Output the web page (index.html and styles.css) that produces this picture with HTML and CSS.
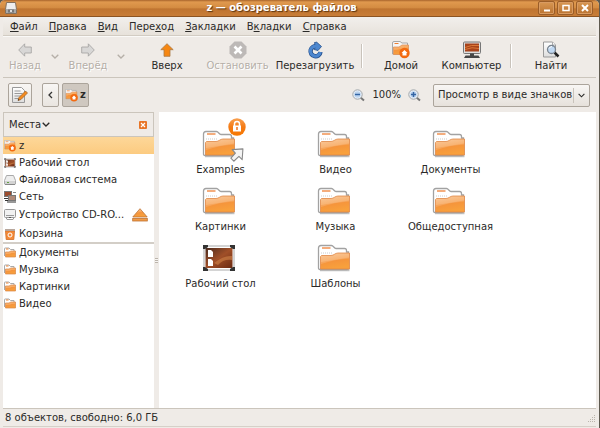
FILE: index.html
```html
<!DOCTYPE html>
<html lang="ru">
<head>
<meta charset="utf-8">
<title>z — обозреватель файлов</title>
<link rel="stylesheet" href="styles.css">
</head>
<body>
<svg class="defs" aria-hidden="true">
  <defs>
    <linearGradient id="orange" x1="0" y1="0" x2="0.3" y2="1"><stop offset="0" stop-color="#f9c08b"/><stop offset="0.5" stop-color="#f7a65a"/><stop offset="0.55" stop-color="#f5943c"/><stop offset="1" stop-color="#f8a03c"/></linearGradient>
    <linearGradient id="paper" x1="0" y1="0" x2="0" y2="1"><stop offset="0" stop-color="#fff"/><stop offset="1" stop-color="#ddd"/></linearGradient>
    <linearGradient id="sunset" x1="0" y1="0" x2="1" y2="1"><stop offset="0" stop-color="#4a2a1e"/><stop offset="0.5" stop-color="#a04f28"/><stop offset="1" stop-color="#6a2a12"/></linearGradient>
    <linearGradient id="lock" x1="0" y1="0" x2="0" y2="1"><stop offset="0" stop-color="#f9a050"/><stop offset="0.5" stop-color="#f47a14"/><stop offset="1" stop-color="#f77800"/></linearGradient>
    <symbol id="folder" viewBox="0 0 34 28">
      <path d="M3 26h29.500" stroke="#999" stroke-width="2.500" opacity="0.600"/>
      <path d="M1.500 24V4q0-2.500 2.500-2.500h10.500c2 0 2.500 3 4.500 3h8.500q2 0 2 2V8h2v16q0 1.500-1.500 1.500H3q-1.500 0-1.500-1.500z" fill="#fff" stroke="#a2a2a2" stroke-width="1.300"/>
      <path d="M4 9h11" stroke="#ccc" stroke-dasharray="1 1"/>
      <path d="M5 4h8.500" stroke="#ee8136" stroke-width="1.300"/>
      <path d="M4.500 11.500h9.500c3 0 4-2.500 7-2.500h11.500v16H3.500V12.500z" fill="url(#orange)" stroke="#df8848" stroke-width="0.800"/>
      <path d="M4 12h10c3 0 4-2.500 7-2.500h11v5C23 15 13 17 4 20z" fill="#fff" opacity="0.160"/>
    </symbol>
    <symbol id="folder-small" viewBox="0 0 12 11">
      <path d="M.5 8.500V1q0-.5.500-.5h4L6.500 2H10v2" fill="#fff" stroke="#aaa"/>
      <path d="M2 1.500h2.500" stroke="#ed8334"/>
      <path d="M1.500 4.500H5L7 3.500h4.500v6h-10z" fill="url(#orange)" stroke="#d98545" stroke-width="0.700"/>
    </symbol>
    <symbol id="home-folder" viewBox="0 0 18 18">
      <path d="M.5 13V2q0-1.500 1.500-1.500h6L10 2h5.500v11z" fill="#f5f5f5" stroke="#a7a7a7"/>
      <path d="M2.500 2.500h4" stroke="#ee7e32"/>
      <path d="M1.500 6H7l3-2h6.500v9.500h-15z" fill="url(#orange)" stroke="#dc8a50" stroke-width="0.700"/>
      <circle cx="12.500" cy="12" r="5.200" fill="#f36a10"/>
      <path d="M9.500 12l3-3 3 3h-1v2.500h-4V12z" fill="#fff"/>
    </symbol>
    <symbol id="desktop" viewBox="0 0 34 28">
      <rect x="2" y="2" width="30" height="24" fill="#fff" stroke="#aaa"/>
      <rect x="3.500" y="4" width="27" height="20" fill="url(#sunset)"/>
      <path d="M12 19q10-8 18-7v4q-9-1-14 5z" fill="#c77a43" opacity="0.700"/>
      <path d="M6 6h3l2 2v5H6zm0 9h3l2 2v5H6z" fill="#fff"/>
      <path d="M1 1h5v2L3 5H1zm32 0h-5v2l3 2h2zM1 27h5v-2l-3-2H1zm32 0h-5v-2l3-2h2z" fill="#333"/>
    </symbol>
    <symbol id="screen" viewBox="0 0 18 17">
      <rect x="0.500" y="0.500" width="17" height="11.500" rx="1" fill="#ddd" stroke="#777"/>
      <rect x="2" y="2" width="14" height="8" fill="#a8431b"/>
      <path d="M2 6q6-3 14-2M2 8q7-3 14-1" stroke="#dc7937" fill="none"/>
      <path d="M7 12h4v2h4.500l1.500 2.500H1L2.500 14H7z" fill="#464646"/>
    </symbol>
    <symbol id="drive" viewBox="0 0 12 11">
      <path d="M2.500 1h7l2 5v3.500H.5V6z" fill="#eee" stroke="#aaa"/>
      <path d="M1 6.500h10v3H1z" fill="#d3d3d3"/><path d="M3 8h2" stroke="#62a040"/><path d="M1 10h10" stroke="#888"/>
    </symbol>
    <symbol id="optical" viewBox="0 0 12 12">
      <rect x="0.500" y="0.500" width="11" height="8" rx="1" fill="#f1f1f1" stroke="#999"/>
      <path d="M2 6.500h8M3 10.500h6l1-2H2z" stroke="#999" fill="#fff"/><path d="M5 8.500h2" stroke="#555"/>
    </symbol>
    <symbol id="network" viewBox="0 0 12 12">
      <rect x="0.500" y="0.500" width="7" height="5" fill="#9b4b2c" stroke="#777"/><rect x="4.500" y="4.500" width="7" height="5" fill="#b08a78" stroke="#777"/>
      <path d="M0 7.500h4M3 11h9M1 9.500h3" stroke="#333"/><path d="M9 1.500h3" stroke="#888"/>
    </symbol>
    <symbol id="trash" viewBox="0 0 12 12">
      <path d="M1.500 3h9l-.7 8.500H2.200z" fill="#f58a38" stroke="#cf6d26" stroke-width="0.800"/><path d="M1 2h10" stroke="#b8a79c" stroke-width="2"/>
      <circle cx="6" cy="7" r="2" fill="none" stroke="#fff"/>
    </symbol>
    <symbol id="eject" viewBox="0 0 16 14">
      <path d="M8 .7L15.200 9H.8z" fill="url(#orange)" stroke="#bd7234" stroke-width="0.800"/><rect x="0.700" y="10.500" width="14.600" height="2.500" fill="#f29b45" stroke="#bd7234" stroke-width="0.800"/>
    </symbol>
    <symbol id="arrow" viewBox="0 0 14 14">
      <path d="M7 .7l6.200 6H10v6.600H4V6.700H.8z" stroke-linejoin="round" fill="currentColor" stroke="#a97945" stroke-width="0.800"/>
    </symbol>
    <symbol id="chevron" viewBox="0 0 8 5"><path d="M.7.7L4 4 7.300.7" fill="none" stroke="currentColor" stroke-width="1.300"/></symbol>
    <symbol id="stop" viewBox="0 0 18 18">
      <path d="M5.500.5h7l5 5v7l-5 5h-7l-5-5v-7z" fill="#bdb9b7"/><path d="M5.500 5.500l7 7m0-7l-7 7" stroke="#fff" stroke-width="2.600"/>
    </symbol>
    <symbol id="reload" viewBox="0 0 18 18">
      <path d="M11 5.500A5 5 0 1 0 14.500 11" fill="none" stroke="#244f8c" stroke-width="4.400"/>
      <path d="M8.500 1.500l2-.2V1l5 4.500-3.500 4-4-1 1.500-2z" fill="#4d87cf" stroke="#244f8c" stroke-width="0.800"/>
      <path d="M10.500 5.300A5 5 0 1 0 14.300 11" fill="none" stroke="#4d87cf" stroke-width="3"/>
    </symbol>
    <symbol id="find" viewBox="0 0 18 17">
      <path d="M1.500.5h9l3 3v12h-12z" fill="url(#paper)" stroke="#999"/><path d="M10.500.5v3h3" fill="#fff" stroke="#aaa"/>
      <path d="M12.500 11l4 4" stroke="#222" stroke-width="2.500"/><circle cx="9.500" cy="8" r="4" fill="#c0d8f2" stroke="#7a848f" stroke-width="1.300"/><path d="M7 7q1-2 3-2" stroke="#fff" fill="none"/>
    </symbol>
    <symbol id="lens" viewBox="0 0 13 13">
      <path d="M8.500 8.500l3.500 3" stroke="#777" stroke-width="2"/><circle cx="5.500" cy="5.500" r="4.700" fill="#eef4fb" stroke="#a0a5aa"/><circle cx="5.500" cy="5.500" r="3.300" fill="#bdd5f0"/>
    </symbol>
    <symbol id="edit" viewBox="0 0 18 17">
      <path d="M1.500.5h9l3 3v12h-12z" fill="url(#paper)" stroke="#999"/><path d="M3.500 4h6M3.500 6.500h8M3.500 9h8M3.500 11.500h6" stroke="#999"/>
      <path d="M7 13.500l1-3 6.500-6.500 2 2-6.500 6.500z" fill="#f58b1f" stroke="#98602a" stroke-width="0.700"/><path d="M7 13.500l.5-1.500 1 1z" fill="#222"/>
    </symbol>
  </defs>
</svg>
<div class="window">
  <header class="titlebar">
    <svg class="app-icon" viewBox="0 0 12 12"><path d="M1.500.5h9l1 7v4H.5v-4z" fill="#eee" stroke="#83715e"/><path d="M1 7h10v4H1z" fill="#aaa"/><path d="M3 7.500h6v3H3z" fill="#777"/><path d="M5 8h2v2H5z" fill="#ddd"/></svg>
    <h1>z — обозреватель файлов</h1>
    <div class="controls">
      <button aria-label="Свернуть"><svg viewBox="0 0 10 10"><path d="M2 7.500h6" stroke="#fff" stroke-width="2"/></svg></button>
      <button aria-label="Развернуть"><svg viewBox="0 0 10 10"><path d="M2 2.500h6v5H2z" fill="none" stroke="#fff" stroke-width="1.500"/></svg></button>
      <button aria-label="Закрыть"><svg viewBox="0 0 10 10"><path d="M2 2l6 6m0-6L2 8" stroke="#fff" stroke-width="2"/></svg></button>
    </div>
  </header>
  <nav class="menubar">
    <button><u>Ф</u>айл</button><button><u>П</u>равка</button><button><u>В</u>ид</button><button>Пере<u>х</u>од</button><button><u>З</u>акладки</button><button>В<u>к</u>ладки</button><button><u>С</u>правка</button>
  </nav>
  <div class="toolbar">
    <button class="tool" disabled><svg class="pale left"><use href="#arrow"/></svg>Назад</button>
    <button class="tool history" disabled aria-label="История назад"><svg><use href="#chevron"/></svg></button>
    <button class="tool" disabled><svg class="pale right"><use href="#arrow"/></svg>Вперёд</button>
    <button class="tool history" disabled aria-label="История вперёд"><svg><use href="#chevron"/></svg></button>
    <button class="tool"><svg class="up"><use href="#arrow"/></svg>Вверх</button>
    <button class="tool" disabled><svg><use href="#stop"/></svg>Остановить</button>
    <button class="tool"><svg><use href="#reload"/></svg>Перезагрузить</button>
    <span class="rule"></span>
    <button class="tool"><svg><use href="#home-folder"/></svg>Домой</button>
    <button class="tool"><svg><use href="#screen"/></svg>Компьютер</button>
    <span class="rule"></span>
    <button class="tool"><svg><use href="#find"/></svg>Найти</button>
  </div>
  <div class="location">
    <button class="box edit" aria-label="Изменить адрес"><svg><use href="#edit"/></svg></button>
    <button class="box prev" aria-label="Раньше"><svg viewBox="0 0 5 8"><path d="M4 1L1 4l3 3" fill="none" stroke="#333" stroke-width="1.300"/></svg></button>
    <button class="box current"><svg><use href="#home-folder"/></svg>z</button>
    <div class="zoom">
      <button aria-label="Уменьшить"><svg viewBox="0 0 13 13"><use href="#lens"/><path d="M3 5.500h5" stroke="#3465a4" stroke-width="1.500"/></svg></button>
      <span>100%</span>
      <button aria-label="Увеличить"><svg viewBox="0 0 13 13"><use href="#lens"/><path d="M3 5.500h5M5.500 3v5" stroke="#3465a4" stroke-width="1.500"/></svg></button>
    </div>
    <div class="view">
      <select aria-label="Режим просмотра"><option>Просмотр в виде значков</option></select>
      <svg><use href="#chevron"/></svg>
    </div>
  </div>
  <div class="content">
    <aside class="sidebar">
      <div class="side-head">
        <button class="places">Места<svg><use href="#chevron"/></svg></button>
        <button class="close" aria-label="Закрыть панель"><svg viewBox="0 0 8 8"><rect width="8" height="8" rx="1" fill="#e87527"/><path d="M2 2l4 4m0-4L2 6" stroke="#fff" stroke-width="1.200"/></svg></button>
      </div>
      <ul>
        <li class="selected"><svg><use href="#home-folder"/></svg>z</li>
        <li><svg><use href="#desktop"/></svg>Рабочий стол</li>
        <li><svg><use href="#drive"/></svg>Файловая система</li>
        <li><svg><use href="#network"/></svg>Сеть</li>
        <li class="tall"><svg><use href="#optical"/></svg>Устройство CD-RO...<button class="eject" aria-label="Извлечь"><svg><use href="#eject"/></svg></button></li>
        <li><svg><use href="#trash"/></svg>Корзина</li>
      </ul>
      <ul class="bookmarks">
        <li><svg><use href="#folder-small"/></svg>Документы</li>
        <li><svg><use href="#folder-small"/></svg>Музыка</li>
        <li><svg><use href="#folder-small"/></svg>Картинки</li>
        <li><svg><use href="#folder-small"/></svg>Видео</li>
      </ul>
    </aside>
    <div class="splitter"><span></span></div>
    <main class="files">
      <figure><div class="pic"><svg><use href="#folder"/></svg>
        <svg class="lock" viewBox="0 0 18 18"><circle cx="9" cy="9" r="8.700" fill="url(#lock)"/><path d="M6.500 8V5.800q0-2.300 2.500-2.300t2.500 2.300V8" fill="none" stroke="#fff" stroke-width="1.500"/><rect x="5" y="7.500" width="8" height="6" fill="#fff"/><path d="M9 9v3" stroke="#ee7520" stroke-width="1.500"/></svg>
        <svg class="link" viewBox="0 0 13 13"><path d="M2 1.500L12 .8l-.7 10-3-3L3.500 12.300.8 9.500 5 4.800z" fill="#f4f4f4" stroke="#888" stroke-linejoin="round"/></svg></div>
        <figcaption>Examples</figcaption></figure>
      <figure><div class="pic"><svg><use href="#folder"/></svg></div><figcaption>Видео</figcaption></figure>
      <figure><div class="pic"><svg><use href="#folder"/></svg></div><figcaption>Документы</figcaption></figure>
      <figure><div class="pic"><svg><use href="#folder"/></svg></div><figcaption>Картинки</figcaption></figure>
      <figure><div class="pic"><svg><use href="#folder"/></svg></div><figcaption>Музыка</figcaption></figure>
      <figure><div class="pic"><svg><use href="#folder"/></svg></div><figcaption>Общедоступная</figcaption></figure>
      <figure><div class="pic"><svg><use href="#desktop"/></svg></div><figcaption>Рабочий стол</figcaption></figure>
      <figure><div class="pic"><svg><use href="#folder"/></svg></div><figcaption>Шаблоны</figcaption></figure>
    </main>
  </div>
  <footer class="status">8 объектов, свободно: 6,0 ГБ
    <svg viewBox="0 0 8 8"><path d="M0 7.500h8M2 5.500h6M4 3.500h4M6 1.500h2" stroke="#bbb5ac" stroke-dasharray="1 1"/></svg>
  </footer>
</div>
</body>
</html>
```
FILE: styles.css
```css
* { box-sizing: border-box; }
body {
  margin: 0;
  background: #5e5a50;
  color: #2b2a28;
  font: 10px/16px "DejaVu Sans", sans-serif;
}
button {
  padding: 0;
  border: 0;
  background: none;
  color: inherit;
  font: inherit;
}
svg { display: block; flex: none; }
.defs { position: absolute; width: 0; height: 0; }

.window {
  display: flex;
  flex-direction: column;
  min-height: 100vh;
  border: solid #efebe7;
  border-width: 0 3px 1px;
  border-radius: 5px 5px 0 0;
  background: #efebe7;
  box-shadow: inset 0 -1px #d6d0c8;
  margin-right: 1px;
}
.titlebar {
  display: flex;
  align-items: center;
  height: 17px;
  margin: 0 -3px;
  padding: 0 6px 0 5px;
  border-bottom: 1px solid #8c5423;
  border-radius: 5px 5px 0 0;
  background: linear-gradient(#a8642c, #e0994e 2px, #d38b41 50%, #bf7430 55%, #c87d38);
}
.app-icon { width: 12px; height: 12px; }
.titlebar h1 {
  flex: 1;
  margin: 0 0 0 8px;
  color: #fff;
  font-size: 10px;
  line-height: 16px;
  text-align: center;
  text-shadow: 1px 1px 1px #5c3410;
}
.controls { display: flex; gap: 2px; }
.controls button {
  display: grid;
  place-items: center;
  width: 17px;
  height: 14px;
  border: 1px solid #9a5d28;
  border-radius: 2px;
  background: linear-gradient(#d99752, #bb7331);
  box-shadow: inset 0 0 0 1px #d99b62;
}
.controls svg { width: 10px; height: 10px; }

.menubar {
  display: flex;
  gap: 11px;
  height: 19px;
  padding: 2px 7px 0;
  border-bottom: 1px solid #d2ccc3;
  background: linear-gradient(#f2efec, #e7e2db);
}
.menubar button { line-height: 14px; }
.menubar u { text-underline-offset: 1px; }

.toolbar {
  display: grid;
  grid-template-columns: 44px 16px 50px 16px 76px 65px 90px 4px 74px 67px 12px 68px;
  height: 42px;
  border-top: 1px solid #faf9f7;
  border-bottom: 1px solid #cbc5bc;
}
.tool {
  display: flex;
  flex-direction: column;
  align-items: center;
  padding-top: 4px;
  line-height: 14px;
  white-space: nowrap;
}
.tool svg { width: 18px; height: 18px; }
.tool .up { width: 14px; color: #f68712; }
.tool .pale { width: 14px; color: #d2cec9; filter: grayscale(1) opacity(0.7); }
.tool .left { transform: rotate(-90deg); }
.tool .right { transform: rotate(90deg); }
.tool:disabled { color: #b5afa8; text-shadow: 1px 1px #fff; }
.tool.history { justify-content: center; padding: 0 0 2px; }
.tool.history svg { width: 8px; height: 5px; }
.rule {
  width: 2px;
  height: 24px;
  margin: 7px auto 0;
  border-left: 1px solid #c9c3bb;
  border-right: 1px solid #fff;
}

.location {
  display: flex;
  align-items: center;
  height: 34px;
  padding: 0 6px 0 5px;
}
.box {
  display: flex;
  align-items: center;
  justify-content: center;
  height: 24px;
  border: 1px solid #aba49b;
  border-radius: 2px;
  background: linear-gradient(#f8f6f4, #e9e5e0);
}
.edit { width: 24px; margin-right: 10px; }
.edit svg { width: 18px; height: 17px; }
.prev { width: 17px; margin-right: 3px; }
.prev svg { width: 5px; height: 8px; }
.current {
  gap: 2px;
  width: 27px;
  background: #cfc8c0;
  font-weight: bold;
}
.current svg { width: 13px; height: 13px; }
.zoom {
  display: flex;
  align-items: center;
  gap: 7px;
  margin: 0 12px 0 auto;
}
.zoom svg { width: 13px; height: 13px; }
.view { position: relative; width: 157px; }
.view select {
  display: block;
  width: 100%;
  height: 23px;
  padding: 0 0 0 4px;
  appearance: none;
  border: 1px solid #aba49b;
  border-radius: 2px;
  background: linear-gradient(#f8f6f4, #e6e1db);
  color: inherit;
  font: inherit;
}
.view svg {
  position: absolute;
  top: 4px;
  right: 1px;
  width: 16px;
  height: 15px;
  padding: 5px 4px;
  border-left: 1px solid #c9c3bb;
  pointer-events: none;
}

.content {
  display: flex;
  flex: 1;
  border-bottom: 1px solid #cbc5bc;
}
.sidebar { width: 151px; background: #fff; }
.side-head {
  display: flex;
  align-items: center;
  justify-content: space-between;
  height: 25px;
  padding: 0 6px 0 5px;
  border: 1px solid #cbc5bc;
  background: #efebe7;
}
.places { display: flex; align-items: center; gap: 1px; }
.places svg { width: 8px; height: 5px; }
.close svg { width: 8px; height: 8px; }
.sidebar ul { margin: 0; padding: 0; list-style: none; }
.sidebar li {
  display: flex;
  align-items: center;
  gap: 3px;
  height: 17px;
  padding-left: 1px;
  white-space: nowrap;
}
.sidebar li > svg { width: 12px; height: 12px; }
.sidebar .selected { background: linear-gradient(#fdd799, #fccb80); }
.sidebar .tall { height: 20px; }
.eject { margin: 0 6px 0 auto; }
.eject svg { width: 16px; height: 14px; }
.sidebar .bookmarks { border-top: 2px solid #d3cec7; }
.splitter {
  display: grid;
  align-items: center;
  width: 5px;
}
.splitter span {
  width: 3px;
  height: 5px;
  margin: 0 auto;
  background: repeating-linear-gradient(#bbb4ab 0 1px, #f7f5f3 1px 2px);
}
.files {
  display: grid;
  flex: 1;
  grid-template-columns: repeat(3, 115px);
  grid-auto-rows: 57px;
  padding: 18px 4px;
  background: #fff;
}
figure {
  display: flex;
  flex-direction: column;
  align-items: center;
  margin: 0;
}
.pic { position: relative; margin-right: 4px; }
.pic svg { width: 34px; height: 28px; }
.pic .lock {
  position: absolute;
  top: -12px;
  right: -10px;
  width: 18px;
  height: 18px;
}
.pic .link {
  position: absolute;
  right: -8px;
  bottom: -4px;
  width: 14px;
  height: 14px;
}
figcaption { margin-top: 4px; }

.status {
  display: flex;
  align-items: center;
  justify-content: space-between;
  height: 18px;
  padding: 0 0 1px 2px;
}
.status svg { width: 8px; height: 8px; }
```
